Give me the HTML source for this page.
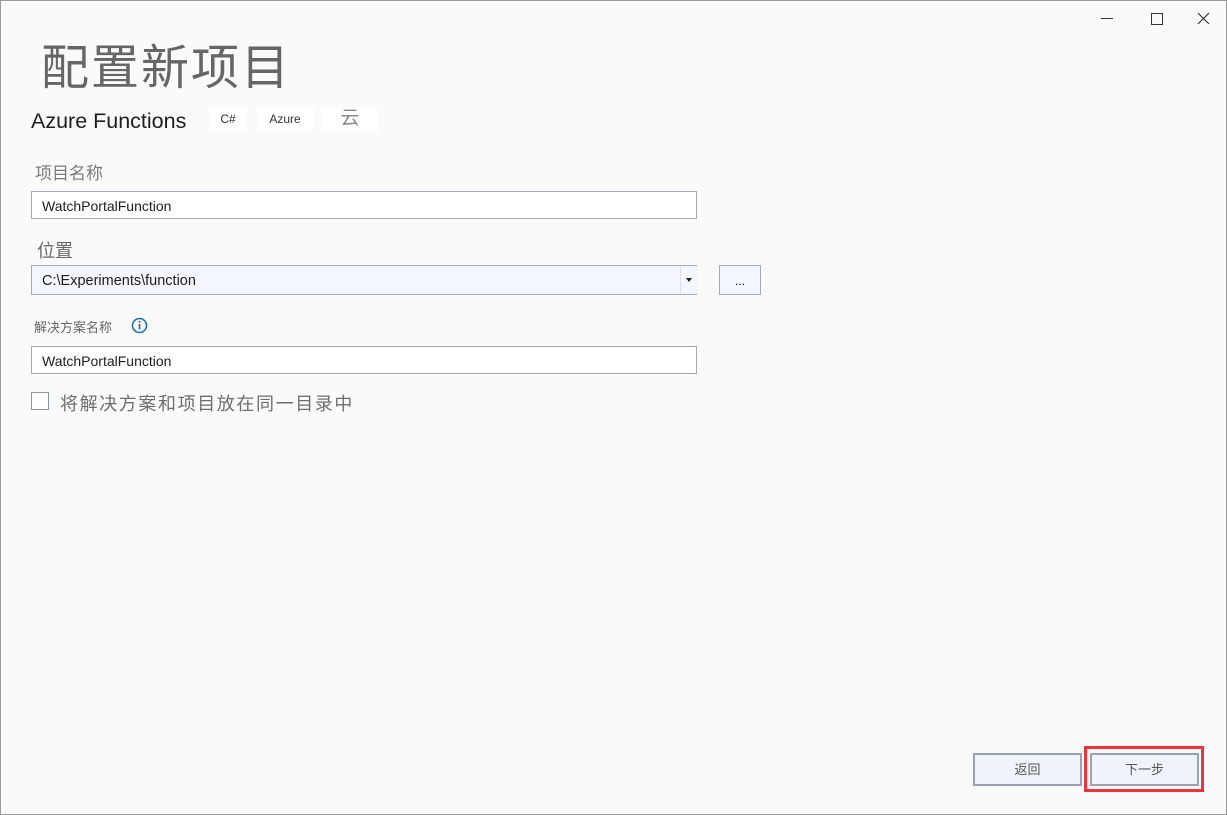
<!DOCTYPE html>
<html><head><meta charset="utf-8"><style>
body{margin:0;width:1227px;height:815px;overflow:hidden;background:#fafafa;font-family:"Liberation Sans","Noto Sans CJK SC",sans-serif;}
.win{position:absolute;left:0;top:0;width:1225px;height:813px;border:1px solid #9a9a9a;background:#fafafa;}
.abs{position:absolute;}
.t{color:#616161;}
.inp{position:absolute;left:30px;height:28px;width:666px;border:1px solid #a3aab8;background:#fff;font-size:14px;line-height:28px;padding-left:10px;box-sizing:border-box;color:#1e1e1e;}
.tag{position:absolute;top:106px;height:24px;background:#fff;border-radius:4px;font-size:12px;line-height:24px;text-align:center;color:#333;}
.btn{position:absolute;top:752px;height:33px;background:#eff3fb;border:2px solid #9aa3b0;box-sizing:border-box;text-align:center;line-height:29px;font-size:13px;color:#555;}
</style></head><body><div class="win">
<div class="abs" style="left:1100px;top:17px;width:12px;height:1px;background:#333"></div>
<div class="abs" style="left:1150px;top:12px;width:10px;height:10px;border:1px solid #333"></div>
<svg class="abs" style="left:1196px;top:11px" width="13" height="13"><path d="M1 1L12 12M12 1L1 12" stroke="#333" stroke-width="1.2"/></svg>
<div class="abs t" style="left:40px;top:38px;font-size:48px;line-height:60px;color:#666;letter-spacing:2px">配置新项目</div>
<div class="abs" style="left:30px;top:106px;font-size:21.5px;line-height:28px;color:#1e1e1e">Azure Functions</div>
<div class="tag" style="left:208px;width:38px">C#</div>
<div class="tag" style="left:256px;width:56px">Azure</div>
<div class="tag" style="left:321px;width:56px;font-size:19px;color:#888">云</div>
<div class="abs t" style="left:34px;top:158px;font-size:17px;color:#7a7a7a">项目名称</div>
<div class="inp" style="top:190px">WatchPortalFunction</div>
<div class="abs t" style="left:36px;top:236px;font-size:18px;color:#6a6a6a">位置</div>
<div class="inp" style="top:264px;height:30px;line-height:30px;background:#f3f6fd;font-size:14.5px">C:\Experiments\function</div>
<div class="abs" style="left:679px;top:265px;width:17px;height:28px;background:#f3f6fd;border-left:1px solid #dde"></div>
<div class="abs" style="left:685px;top:277px;width:0;height:0;border-left:3px solid transparent;border-right:3px solid transparent;border-top:4px solid #222"></div>
<div class="abs" style="left:718px;top:264px;width:42px;height:30px;border:1px solid #a3aab8;box-sizing:border-box;background:#f3f6fd;text-align:center;font-size:12px;line-height:30px">...</div>
<div class="abs t" style="left:33px;top:316px;font-size:13px;color:#666">解决方案名称</div>
<svg class="abs" style="left:130px;top:316px" width="17" height="17"><circle cx="8.5" cy="8.5" r="7" fill="none" stroke="#1a73b8" stroke-width="1.6"/><rect x="7.7" y="7" width="1.7" height="5.5" fill="#1a73b8"/><rect x="7.7" y="4" width="1.7" height="1.7" fill="#1a73b8"/></svg>
<div class="inp" style="top:345px">WatchPortalFunction</div>
<div class="abs" style="left:30px;top:391px;width:18px;height:18px;border:1px solid #8f97a5;box-sizing:border-box;background:#fff"></div>
<div class="abs t" style="left:59px;top:392px;font-size:18px;color:#6e6e6e;line-height:22px;letter-spacing:1.6px">将解决方案和项目放在同一目录中</div>
<div class="btn" style="left:972px;width:109px">返回</div>
<div class="abs" style="left:1083px;top:745px;width:120px;height:46px;border:3px solid #f0323c;box-sizing:border-box"></div>
<div class="btn" style="left:1089px;width:109px">下一步</div>
</div></body></html>
